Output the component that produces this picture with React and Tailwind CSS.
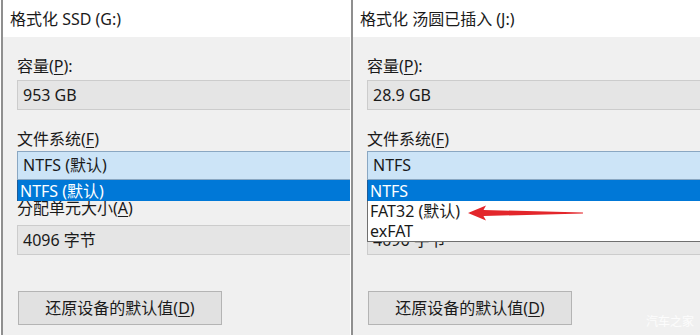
import React from 'react';

const font = { fontFamily: '"Noto Sans", "Noto Sans CJK SC", sans-serif' };

const Underline = ({ children }) => <span className="underline underline-offset-2">{children}</span>;

const Arrow = () => (
  <svg className="absolute z-20 left-[118px] top-[204px]" width="115" height="18" viewBox="0 0 115 18">
    <path d="M0 9 L18 1.5 L15.5 6 L115 8.5 L115 9.5 L15.5 12 L18 16.5 Z" fill="#e3262b" />
  </svg>
);

const Panel = ({ title, capacity, value, options, showArrow, children }) => (
  <div className="relative w-[350px] h-[335px] shrink-0 overflow-hidden bg-white pl-px">
    <div className="h-full border-l-2 border-[#8f8f8f] flex flex-col">
      <div className="h-[37px] bg-white pl-[7px] flex items-center text-[16px] text-[#1a1a1a]">{title}</div>
      <div className="flex-1 bg-[#f0f0f0] pl-[14px] text-[16px] text-[#1a1a1a]">
        <div className="mt-[18px] h-[22px] leading-[22px]">
          容量(<Underline>P</Underline>):
        </div>
        <div className="mt-[3px] h-[30px] bg-[#e5e5e5] border border-[#cccccc] border-r-0 pl-[5px] leading-[28px]">
          {capacity}
        </div>
        <div className="mt-[18px] h-[22px] leading-[22px]">
          文件系统(<Underline>F</Underline>)
        </div>
        <div className="relative mt-[1px]">
          <div className="h-[29px] bg-[#cce4f7] border border-[#8aa7c2] border-r-0 pl-[5px] leading-[27px]">{value}</div>
          <div className="absolute left-0 right-0 top-[29px] z-10">
            {options.map((o, i) => (
              <div
                key={o}
                className={
                  i === 0
                    ? 'h-[21px] bg-[#0078d7] text-white pl-[2px] leading-[22px] border-l border-[#1e5a96]'
                    : 'h-[20px] bg-white pl-[2px] leading-[20px] border-l border-[#6f6f6f]'
                }
              >
                {o}
              </div>
            ))}
            {options.length > 1 && <div className="h-px bg-[#6f6f6f]" />}
          </div>
        </div>
        <div className="mt-[17px] h-[22px] leading-[22px]">
          分配单元大小(<Underline>A</Underline>)
        </div>
        <div className="mt-[6px] h-[30px] bg-[#e5e5e5] border border-[#cccccc] border-r-0 pl-[5px] leading-[28px]">
          4096 字节
        </div>
        <div className="mt-[36px] ml-px w-[204px] h-[34px] bg-[#e1e1e1] border border-[#b4b4b4] flex items-center justify-center">
          还原设备的默认值(<Underline>D</Underline>)
        </div>
      </div>
    </div>
    {showArrow && <Arrow />}
    {children}
  </div>
);

export default function App() {
  return (
    <div className="w-[700px] h-[335px] flex overflow-hidden bg-white" style={font}>
      <Panel title="格式化 SSD (G:)" capacity="953 GB" value="NTFS (默认)" options={['NTFS (默认)']} />
      <Panel
        title="格式化 汤圆已插入 (J:)"
        capacity="28.9 GB"
        value="NTFS"
        options={['NTFS', 'FAT32 (默认)', 'exFAT']}
        showArrow
      >
        <div className="absolute right-[6px] bottom-[4px] text-[12px] text-white/80">汽车之家</div>
      </Panel>
    </div>
  );
}
